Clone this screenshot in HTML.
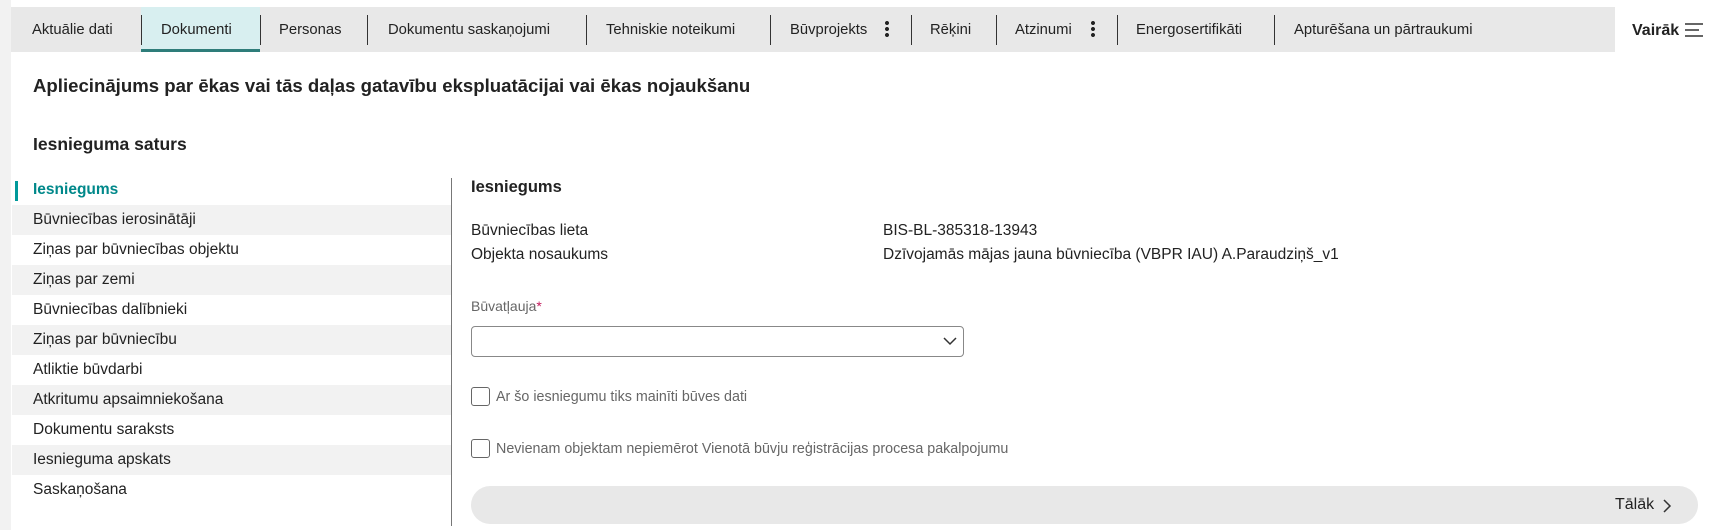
<!DOCTYPE html>
<html><head><meta charset="utf-8"><style>
*{margin:0;padding:0;box-sizing:border-box}
body{width:1717px;height:530px;background:#fff;font-family:"Liberation Sans",Arial,sans-serif;color:#222;position:relative;overflow:hidden}
.a{position:absolute;white-space:nowrap}
.strip{left:0;top:0;width:11px;height:530px;background:#f2f2f2}
.bar{left:11px;top:7px;width:1604px;height:45px;background:#e8e8e8}
.tab{top:9px;height:45px;line-height:43px;font-size:14.8px;color:#222}
.sep{top:15px;width:1px;height:30px;background:#333}
.dots{top:20px;width:4px;height:18px;background:radial-gradient(circle,#222 1.8px,transparent 2.2px) 0 0/4px 6px}
.nav{left:12px;width:439px;height:30px;line-height:30px;padding-left:21px;font-size:15.5px;color:#222}
.g{background:#f2f2f2}
.cb{width:19px;height:19px;border:1.5px solid #666;border-radius:3px;background:#fff}
</style></head><body>
<div class="a strip"></div>
<div class="a bar"></div>
<div class="a" style="left:141px;top:7px;width:119px;height:45px;background:#d8eff0"></div>
<div class="a" style="left:141px;top:49px;width:119px;height:3px;background:#2e7d7a"></div>
<div class="a tab" style="left:32px">Aktuālie dati</div>
<div class="a sep" style="left:141px"></div>
<div class="a tab" style="left:161px">Dokumenti</div>
<div class="a sep" style="left:260px"></div>
<div class="a tab" style="left:279px">Personas</div>
<div class="a sep" style="left:367px"></div>
<div class="a tab" style="left:388px">Dokumentu saskaņojumi</div>
<div class="a sep" style="left:586px"></div>
<div class="a tab" style="left:606px">Tehniskie noteikumi</div>
<div class="a sep" style="left:770px"></div>
<div class="a tab" style="left:790px">Būvprojekts</div>
<div class="a dots" style="left:885px"></div>
<div class="a sep" style="left:911px"></div>
<div class="a tab" style="left:930px">Rēķini</div>
<div class="a sep" style="left:996px"></div>
<div class="a tab" style="left:1015px">Atzinumi</div>
<div class="a dots" style="left:1091px"></div>
<div class="a sep" style="left:1117px"></div>
<div class="a tab" style="left:1136px">Energosertifikāti</div>
<div class="a sep" style="left:1274px"></div>
<div class="a tab" style="left:1294px">Apturēšana un pārtraukumi</div>
<div class="a" style="left:1632px;top:22px;font-size:16px;font-weight:bold;color:#222">Vairāk</div>
<svg class="a" style="left:1684px;top:22px" width="20" height="16"><path d="M1 2H19M1 8H15M1 14H19" stroke="#333" stroke-width="1.5"/></svg>

<div class="a" style="left:33px;top:75px;font-size:18.6px;font-weight:bold">Apliecinājums par ēkas vai tās daļas gatavību ekspluatācijai vai ēkas nojaukšanu</div>
<div class="a" style="left:33px;top:134px;font-size:17.5px;font-weight:bold">Iesnieguma saturs</div>

<div class="a nav" style="top:175px;color:#00888a;font-weight:bold">Iesniegums</div>
<div class="a" style="left:15px;top:181px;width:3px;height:20px;background:#00999a"></div>
<div class="a nav g" style="top:205px">Būvniecības ierosinātāji</div>
<div class="a nav" style="top:235px">Ziņas par būvniecības objektu</div>
<div class="a nav g" style="top:265px">Ziņas par zemi</div>
<div class="a nav" style="top:295px">Būvniecības dalībnieki</div>
<div class="a nav g" style="top:325px">Ziņas par būvniecību</div>
<div class="a nav" style="top:355px">Atliktie būvdarbi</div>
<div class="a nav g" style="top:385px">Atkritumu apsaimniekošana</div>
<div class="a nav" style="top:415px">Dokumentu saraksts</div>
<div class="a nav g" style="top:445px">Iesnieguma apskats</div>
<div class="a nav" style="top:475px">Saskaņošana</div>
<div class="a" style="left:451px;top:178px;width:1px;height:348px;background:#777"></div>

<div class="a" style="left:471px;top:178px;font-size:16.5px;font-weight:bold">Iesniegums</div>
<div class="a" style="left:471px;top:222px;font-size:15.5px">Būvniecības lieta</div>
<div class="a" style="left:883px;top:222px;font-size:15.5px">BIS-BL-385318-13943</div>
<div class="a" style="left:471px;top:246px;font-size:15.5px">Objekta nosaukums</div>
<div class="a" style="left:883px;top:246px;font-size:15.5px">Dzīvojamās mājas jauna būvniecība (VBPR IAU) A.Paraudziņš_v1</div>
<div class="a" style="left:471px;top:298px;font-size:14px;color:#666">Būvatļauja<span style="color:#c2185b">*</span></div>
<div class="a" style="left:471px;top:326px;width:493px;height:31px;border:1px solid #888;border-radius:4px"></div>
<svg class="a" style="left:943px;top:337px" width="14" height="9"><path d="M1 1L7 7L13 1" stroke="#333" stroke-width="1.5" fill="none"/></svg>
<div class="a cb" style="left:471px;top:387px"></div>
<div class="a" style="left:496px;top:389px;font-size:14.3px;color:#666">Ar šo iesniegumu tiks mainīti būves dati</div>
<div class="a cb" style="left:471px;top:439px"></div>
<div class="a" style="left:496px;top:441px;font-size:14.3px;color:#666">Nevienam objektam nepiemērot Vienotā būvju reģistrācijas procesa pakalpojumu</div>
<div class="a" style="left:471px;top:486px;width:1227px;height:38px;background:#e8e8e8;border-radius:19px"></div>
<div class="a" style="left:1615px;top:496px;font-size:16px;color:#222">Tālāk</div>
<svg class="a" style="left:1662px;top:498px" width="10" height="16"><path d="M2 2L8 8L2 14" stroke="#333" stroke-width="1.5" fill="none"/></svg>
</body></html>
